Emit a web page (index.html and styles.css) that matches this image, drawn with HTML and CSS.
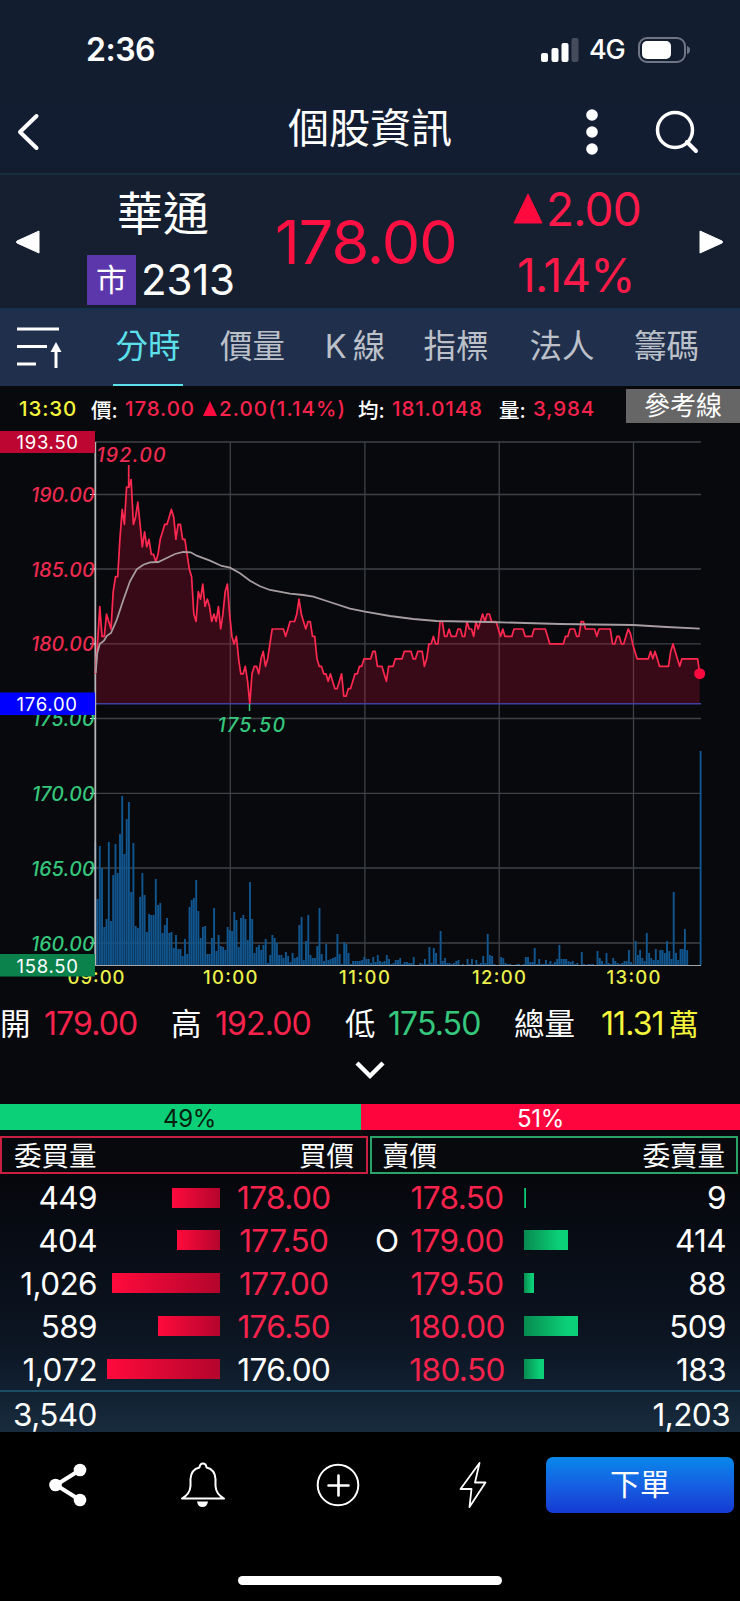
FILE: index.html
```
<!DOCTYPE html>
<html lang="zh-Hant">
  <head>
    <meta charset="UTF-8" />
    <meta name="viewport" content="width=device-width, initial-scale=1.0" />
    <title>個股資訊</title>
    <link rel="stylesheet" href="styles.css">
  </head>
  <body>
    <div class="statusBar">
      <span class="time">2:36</span>
      <svg class="signal" width="38" height="24" viewBox="0 0 38 24">
        <rect x="0" y="15" width="7" height="9" rx="2" fill="#fff" />
        <rect x="10.500" y="10" width="7" height="14" rx="2" fill="#fff" />
        <rect x="20.500" y="5" width="7" height="19" rx="2" fill="#fff" />
        <rect x="30.500" y="0" width="7" height="24" rx="2" fill="#454d5c" />
      </svg>
      <span class="network">4G</span>
      <svg class="battery" width="53" height="26" viewBox="0 0 53 26">
        <rect x="1" y="1" width="46" height="24" rx="8" fill="none" stroke="#6e7685" stroke-width="2" />
        <rect x="4" y="4" width="29" height="18" rx="5" fill="#fff" />
        <path d="M49 9q3 1 3 4t-3 4z" fill="#6e7685" />
      </svg>
    </div>

    <header class="titleBar">
      <svg class="back" width="24" height="38" viewBox="0 0 24 38">
        <path d="M20.500 3L4 19l16.500 16" fill="none" stroke="#fff" stroke-width="4" stroke-linecap="round" stroke-linejoin="round" />
      </svg>
      <h1>個股資訊</h1>
      <svg class="more" width="12" height="46" viewBox="0 0 12 46">
        <circle cx="6" cy="6" r="5.800" fill="#fff" />
        <circle cx="6" cy="23" r="5.800" fill="#fff" />
        <circle cx="6" cy="40" r="5.800" fill="#fff" />
      </svg>
      <svg class="search" width="44" height="44" viewBox="0 0 44 44">
        <circle cx="20" cy="20" r="17.500" fill="none" stroke="#fff" stroke-width="3.500" />
        <path d="M32 32l9 9" stroke="#fff" stroke-width="4" stroke-linecap="round" />
      </svg>
    </header>

    <section class="quote">
      <svg class="prev" width="24" height="24" viewBox="0 0 24 24"><path d="M23 1v22L1 13q-1-1 0-2z" fill="#fff" stroke="#fff" stroke-linejoin="round" /></svg>
      <div class="stock">
        <div class="stockName">華通</div>
        <div class="stockCode"><span class="market">市</span><span class="code">2313</span></div>
      </div>
      <div class="price">178.00</div>
      <div class="change">
        <div class="diff"><svg width="30" height="31" viewBox="0 0 30 31"><path d="M15 1L29 30H1z" fill="#ff0a3f" stroke="#ff0a3f" stroke-linejoin="round" /></svg><span>2.00</span></div>
        <div class="percent">1.14%</div>
      </div>
      <svg class="next" width="24" height="24" viewBox="0 0 24 24"><path d="M1 1v22l22-10q1-1 0-2z" fill="#fff" stroke="#fff" stroke-linejoin="round" /></svg>
    </section>

    <nav class="tabs">
      <svg class="sort" width="46" height="42" viewBox="0 0 46 42">
        <path d="M0 2h42M0 19.500h30M0 37h19" stroke="#fff" stroke-width="3" />
        <path d="M39 22v19" stroke="#fff" stroke-width="3" />
        <path d="M39 15l5.500 10h-11z" fill="#fff" />
      </svg>
      <a class="tab active">分時</a>
      <a class="tab">價量</a>
      <a class="tab kline">K 線</a>
      <a class="tab wide">指標</a>
      <a class="tab">法人</a>
      <a class="tab">籌碼</a>
    </nav>

    <div class="info">
      <span class="yellow infoTime">13:30</span>
      <span class="infoLabel">價:</span>
      <span class="red infoPrice">178.00</span>
      <span class="red infoDiff"><svg width="14" height="15" viewBox="0 0 14 15"><path d="M7 0l7 15H0z" fill="#ff0a3f" /></svg>2.00(1.14%)</span>
      <span class="infoLabel">均:</span>
      <span class="red infoAvg">181.0148</span>
      <span class="infoLabel">量:</span>
      <span class="red infoVol">3,984</span>
      <button class="refLine">參考線</button>
    </div>

    <svg class="chart" width="740" height="559" viewBox="0 431 740 559">
      <g class="grid">
        <path d="M95 442H701M95 494.500H701M95 569H701M95 643.900H701M95 718.500H701M95 793.300H701M95 868H701M95 943H701" />
        <path d="M230.300 442V965M364.900 442V965M499.200 442V965M633.500 442V965" />
      </g>
      <path id="area" class="area" />
      <path d="M95 703.700H701" class="refPrice" />
      <path id="volume" class="volume" />
      <path d="M95 965.500H701" class="baseline" />
      <path d="M95.300 442V965" class="axis" />
      <path d="M90 494.500h5M90 569h5M90 643.900h5M90 718.500h5M90 793.300h5M90 868h5M90 943h5" stroke="#fff" />
      <path id="line" class="line" />
      <path d="M128.700 465V488" class="line" />
      <path d="M249.500 704V711" stroke="#35c77c" stroke-width="1.500" />
      <path id="avg" class="avg" />
      <circle cx="699.700" cy="673.700" r="5.500" fill="#ff0a3f" />

      <g class="scale up">
        <text x="31" y="502" textLength="63.500">190.00</text>
        <text x="31" y="576.500" textLength="63.500">185.00</text>
        <text x="31" y="651.300" textLength="63.500">180.00</text>
        <text x="96.500" y="461.500" textLength="69">192.00</text>
      </g>
      <g class="scale down">
        <text x="32" y="726.300" textLength="62.500">175.00</text>
        <text x="32" y="801" textLength="62.500">170.00</text>
        <text x="31" y="875.500" textLength="63.500">165.00</text>
        <text x="31" y="950.500" textLength="63.500">160.00</text>
        <text x="217.500" y="731.500" textLength="67.500">175.50</text>
      </g>
      <g class="hours">
        <text x="67.500" y="984" textLength="57">09:00</text>
        <text x="203" y="984" textLength="54.500">10:00</text>
        <text x="339" y="984" textLength="51">11:00</text>
        <text x="472" y="984" textLength="54">12:00</text>
        <text x="606.500" y="984" textLength="54">13:00</text>
      </g>
      <g class="limits">
        <rect y="431" width="95" height="22" fill="#bd0632" />
        <rect y="692.500" width="95" height="22.500" fill="#0000ff" />
        <rect y="954" width="95" height="22.500" fill="#0b824c" />
        <text x="16.500" y="449.300" textLength="61.500">193.50</text>
        <text x="16.500" y="711" textLength="60.500">176.00</text>
        <text x="16.500" y="972.800" textLength="61.500">158.50</text>
      </g>
    </svg>

    <div class="summary">
      <span>開</span><b class="red">179.00</b>
      <span>高</span><b class="red">192.00</b>
      <span>低</span><b class="green">175.50</b>
      <span>總量</span><b class="yellow">11.31<i>萬</i></b>
    </div>

    <div class="expand">
      <svg width="30" height="19" viewBox="0 0 30 19"><path d="M2 2l13 13L28 2" fill="none" stroke="#fff" stroke-width="4.400" /></svg>
    </div>

    <div class="ratio">
      <div class="outer">49%</div>
      <div class="inner">51%</div>
    </div>

    <div class="bookHead">
      <div class="buyHead"><span>委買量</span><span>買價</span></div>
      <div class="sellHead"><span>賣價</span><span>委賣量</span></div>
    </div>

    <div class="book">
      <div id="rows"></div>
      <div class="totals"><span>3,540</span><span>1,203</span></div>
    </div>

    <footer class="actions">
      <svg class="share" width="40" height="46" viewBox="0 0 40 46">
        <path d="M31 8L7 23l24 15" fill="none" stroke="#fff" stroke-width="4" />
        <circle cx="31" cy="8" r="6.300" fill="#fff" /><circle cx="6.500" cy="23" r="6.300" fill="#fff" /><circle cx="31" cy="38" r="6.300" fill="#fff" />
      </svg>
      <svg class="bell" width="46" height="46" viewBox="0 0 46 46">
        <path d="M2 36.500Q10 32 10.500 24V17Q11 7.500 19.500 5.500Q20 1.500 23 1.500T26.500 5.500Q35 7.500 35.500 17V24Q36 32 44 36.500z" fill="none" stroke="#fff" stroke-width="2" stroke-linejoin="round" />
        <path d="M17 39.500h11q-1 5.500-5.500 5.500t-5.500-5.500z" fill="#fff" />
      </svg>
      <svg class="plus" width="44" height="44" viewBox="0 0 44 44">
        <circle cx="22" cy="22" r="20.300" fill="none" stroke="#fff" stroke-width="2" />
        <path d="M12.500 22.500h20M22.500 12.500v20" stroke="#fff" stroke-width="2.600" stroke-linecap="round" />
      </svg>
      <svg class="bolt" width="28" height="48" viewBox="0 0 28 48">
        <path d="M20.500 2L1.500 28H12.500L10.500 46L26.500 21.500H16z" fill="none" stroke="#fff" stroke-width="1.800" stroke-linejoin="round" />
      </svg>
      <button class="order">下單</button>
    </footer>
    <div class="homeBar"></div>

    <script>
      // one value per minute, 09:00 - 13:30
      const prices = [
        178, 180, 182.5, 180.5, 180.5, 182, 181.5, 181, 183.5, 184.5,
        184.5, 187, 189, 188, 190.5, 190.5, 191, 188, 188.5, 189.5,
        188, 186.5, 187.5, 186.5, 187, 186, 186, 185.5, 186, 187,
        187.5, 188, 188, 188.5, 189, 188.5, 187, 188, 188, 187,
        187, 186, 185, 184.5, 182, 181.5, 183.5, 183, 184, 182.5,
        183, 182.5, 181.5, 182, 181.5, 182.5, 181, 182, 183.5, 184,
        182, 180.5, 180, 180.5, 179, 178, 178, 178.5, 177.5, 176,
        178, 178.5, 178.5, 178, 179, 179.5, 178.5, 179, 180, 181,
        181, 181, 181, 181, 181, 180.5, 181, 181.5, 181.5, 181.5,
        182, 183, 182, 181.5, 181, 181.5, 181.5, 180.5, 180.5, 179,
        178.5, 178.5, 178, 178, 177.5, 178, 177.5, 177, 177, 177.5,
        178, 176.5, 176.5, 177, 177, 177.5, 178, 178, 178.5, 178.5,
        179, 179, 179, 179, 179.5, 179.5, 178.5, 178.5, 178.5, 178,
        177.5, 178.5, 178.5, 178.5, 179, 179, 179, 179, 179.5, 179.5,
        179.5, 179.5, 179, 179, 179.5, 179.5, 179.5, 178.5, 179, 180,
        180, 180.5, 180, 180, 181.5, 181.5, 180.5, 180.5, 181, 180.5,
        180.5, 180.5, 181, 181, 180.5, 180.5, 181.5, 181, 181, 180.5,
        181.5, 181, 181.5, 182, 181.5, 182, 182, 181.5, 181.5, 181.5,
        181, 180.5, 181, 180.5, 180.5, 180.5, 180.5, 181, 181, 181,
        181, 181, 180.5, 180.5, 180.5, 180.5, 181, 181, 181, 181,
        181, 181, 180.5, 180, 180, 180, 180, 180, 180, 180,
        180.5, 180.5, 181, 181, 181, 180.5, 180.5, 181.5, 181.5, 181,
        181, 181, 181, 181, 180.5, 181, 181, 181, 181, 181,
        181, 180, 180, 180.5, 180.5, 180, 180, 180.5, 181, 180.7,
        180, 179.5, 179, 179, 179, 179, 179, 179, 179.5, 179,
        179.5, 179, 178.5, 178.5, 178.5, 178.5, 178.5, 179.5, 180, 179.5,
        179, 178.5, 179, 179, 179, 179, 179, 179, 179, 179,
        178,
      ];
      const volumes = [
        123, 66, 119, 97, 38, 46, 123, 44, 90, 121, 92, 131, 169, 111, 146, 163, 73, 122, 39, 37,
        68, 92, 70, 33, 51, 50, 50, 86, 60, 62, 32, 40, 47, 32, 33, 17, 30, 16, 16, 9,
        26, 11, 58, 65, 67, 85, 54, 27, 38, 39, 11, 11, 27, 57, 14, 30, 19, 18, 15, 38,
        35, 34, 53, 45, 18, 47, 50, 46, 25, 83, 46, 12, 18, 20, 15, 20, 26, 2, 10, 30,
        27, 22, 10, 10, 7, 13, 9, 3, 12, 7, 8, 40, 48, 5, 24, 50, 10, 7, 7, 19,
        57, 11, 4, 21, 5, 6, 7, 8, 31, 11, 1, 23, 21, 12, 1, 4, 4, 4, 4, 5,
        8, 6, 6, 2, 8, 3, 10, 4, 3, 4, 10, 6, 1, 2, 5, 5, 7, 1, 3, 3,
        2, 2, 8, 0, 0, 2, 1, 6, 1, 18, 2, 17, 12, 1, 34, 4, 7, 2, 2, 1,
        2, 4, 5, 0, 1, 0, 6, 1, 6, 0, 5, 1, 2, 9, 2, 31, 10, 9, 1, 0,
        0, 8, 7, 2, 1, 1, 0, 0, 1, 1, 0, 1, 8, 8, 3, 3, 17, 1, 6, 1,
        1, 5, 1, 4, 1, 3, 6, 20, 6, 6, 6, 4, 3, 4, 1, 2, 0, 13, 1, 0,
        1, 1, 1, 0, 14, 7, 4, 1, 12, 2, 1, 7, 4, 2, 1, 2, 4, 4, 15, 3,
        1, 24, 10, 15, 7, 4, 32, 12, 7, 5, 16, 5, 15, 15, 12, 24, 14, 6, 73, 12,
        5, 16, 16, 36, 15, 0, 0, 0, 0, 0, 214,
      ];
      const average = [
        [95.7, 673], [97.3, 653], [99.7, 644], [104, 640.7], [106.7, 636], [111, 633], [116.7, 620],
        [123.3, 600], [130, 581.3], [136.7, 569.3], [143.3, 564.7], [150, 562.3], [158.3, 562],
        [166.7, 558], [175, 554], [183.3, 552], [190.7, 552.3], [196.7, 555.7], [210, 560.7],
        [221.7, 566], [230, 567.7], [240, 573.3], [250, 580.7], [260, 586.3], [270, 590],
        [290, 593.7], [303.3, 595], [313.3, 596.7], [326.7, 601], [350, 608.7], [365, 611.7],
        [390, 616], [413.3, 619], [436.7, 621], [490, 622], [560, 624], [633.3, 625],
        [666.7, 627], [699.7, 628.7],
      ];

      const xAt = (i, step) => (95.3 + i * step).toFixed(1);
      const yAt = (price) => (494.5 + (190 - price) * 14.94).toFixed(1);

      const points = prices.map((p, i) => `${xAt(i, 2.239)} ${yAt(p)}`).join("L");
      document.getElementById("line").setAttribute("d", `M${points}`);
      document.getElementById("area").setAttribute("d", `M95.3 703.7L${points}V703.7z`);
      document.getElementById("avg").setAttribute("d", "M" + average.map((p) => p.join(" ")).join("L"));
      document
        .getElementById("volume")
        .setAttribute("d", volumes.map((v, i) => `M${xAt(i, 2.242)} 965v-${v}`).join(""));

      const book = [
        ["449", 48, "178.00", "", "178.50", 2, "9"],
        ["404", 43, "177.50", "O", "179.00", 44, "414"],
        ["1,026", 108, "177.00", "", "179.50", 10, "88"],
        ["589", 62, "176.50", "", "180.00", 54, "509"],
        ["1,072", 113, "176.00", "", "180.50", 20, "183"],
      ];
      document.getElementById("rows").innerHTML = book
        .map(
          (r) => `
          <div class="row">
            <span class="qty">${r[0]}</span>
            <span class="barBuy"><i style="width: ${r[1]}px"></i></span>
            <span class="buyPrice ${r[2] === "176.00" ? "" : "red"}">${r[2]}</span>
            <span class="mark">${r[3]}</span>
            <span class="sellPrice red">${r[4]}</span>
            <span class="barSell"><i style="width: ${r[5]}px"></i></span>
            <span class="qty">${r[6]}</span>
          </div>`
        )
        .join("");
    </script>
  </body>
</html>
```
FILE: styles.css
```
* {
  box-sizing: border-box;
}

body {
  margin: 0;
  width: 740px;
  height: 1601px;
  overflow: hidden;
  background-color: #07090d;
  color: #fff;
  font-family: Inter, "Noto Sans CJK TC", sans-serif;
}

svg {
  display: block;
  flex: none;
}

button {
  border: none;
  padding: 0;
  color: #fff;
  font-family: inherit;
}

.red {
  color: #f8234c;
}

.green {
  color: #35c77c;
}

.yellow {
  color: #f5f53c;
}

/* top */
.statusBar {
  display: flex;
  align-items: center;
  height: 98px;
  padding: 1px 0 0 86px;
  background-color: #131d30;
  line-height: 40px;
}

.time {
  width: 455px;
  padding-top: 1px;
  font-size: 32px;
  font-weight: 600;
  letter-spacing: -0.5px;
}

.network {
  width: 49px;
  margin-left: 10px;
  padding-top: 1px;
  font-size: 27px;
  font-weight: 500;
  letter-spacing: -1.2px;
}

.titleBar {
  display: flex;
  align-items: center;
  height: 75px;
  padding-left: 16px;
  padding-bottom: 8px;
  background-color: #131d31;
}

.titleBar h1 {
  width: 166px;
  margin: -7px 0 0 248px;
  font-size: 41px;
  line-height: 50px;
  font-weight: 400;
  white-space: nowrap;
}

.more {
  margin-left: 132px;
}

.search {
  margin-left: 57px;
}

.quote {
  display: flex;
  align-items: center;
  height: 135px;
  padding-left: 16px;
  border-top: 2px solid #14303f;
  background-color: #151f30;
}

.stock {
  width: 190px;
  margin-left: 47px;
}

.stockName {
  padding-left: 30px;
  height: 76px;
  font-size: 46px;
  line-height: 70px;
}

.stockCode {
  display: flex;
  align-items: center;
  height: 51px;
}

.market {
  width: 49px;
  height: 50px;
  background-color: #5c37ab;
  font-size: 31px;
  line-height: 50px;
  text-align: center;
}

.code {
  margin-left: 5px;
  font-size: 42px;
  letter-spacing: -0.2px;
}

.price {
  width: 237px;
  margin-left: -2px;
  color: #ff1043;
  font-size: 61px;
  letter-spacing: -1px;
}

.change {
  width: 156px;
  margin-left: 1px;
  color: #ff1a4a;
  font-size: 46px;
  line-height: 66px;
  letter-spacing: -0.8px;
  white-space: nowrap;
}

.diff {
  display: flex;
  align-items: center;
  gap: 3px;
}

.percent {
  padding-left: 4px;
}

.next {
  margin-left: 30px;
}

/* tabs */
.tabs {
  display: flex;
  height: 78px;
  border-top: 2px solid #15324d;
  background-color: #202f4c;
}

.sort {
  margin: 17px 50px 0 17px;
}

.tab {
  flex: none;
  width: 70px;
  height: 76px;
  margin-right: 34.5px;
  color: #bcc0c9;
  font-size: 32.5px;
  line-height: 74px;
  text-align: center;
  white-space: nowrap;
}

.tab.active {
  color: #5ce1ec;
  border-bottom: 2px solid #5ce1ec;
}

.tab.kline {
  width: 66px;
  margin-right: 33px;
  word-spacing: -3px;
}

.tab.wide {
  margin-right: 36px;
}

.info {
  display: flex;
  align-items: center;
  height: 45px;
  padding-left: 19px;
  font-size: 20.5px;
  font-weight: 500;
  letter-spacing: 0.9px;
  white-space: nowrap;
}

.infoTime {
  width: 72px;
}

.infoLabel {
  width: 34px;
  letter-spacing: 0;
}

.infoPrice {
  width: 78px;
}

.infoDiff {
  display: flex;
  align-items: center;
  gap: 2px;
  width: 155px;
  letter-spacing: 1.1px;
}

.infoAvg {
  width: 107px;
}

.infoVol {
  width: 93px;
}

.refLine {
  width: 114px;
  height: 34px;
  margin-bottom: 5px;
  background-color: #666;
  font-size: 26px;
  line-height: 34px;
}

/* chart */
.grid {
  stroke: #3f4146;
  stroke-width: 1.3;
}

.area {
  fill: rgba(255, 12, 62, 0.2);
}

.refPrice {
  stroke: #4040a0;
  stroke-width: 1.4;
}

.volume {
  stroke: #11568f;
  stroke-width: 1.9;
}

.baseline {
  stroke: #a5a7aa;
  stroke-width: 1.2;
}

.axis {
  stroke: #b5b5b8;
  stroke-width: 1.8;
}

.line {
  fill: none;
  stroke: #ff2850;
  stroke-width: 1.7;
  stroke-linejoin: round;
}

.avg {
  fill: none;
  stroke: #a79da0;
  stroke-width: 1.8;
}

.scale {
  font-size: 19.5px;
  font-style: italic;
  font-weight: 500;
}

.up {
  fill: #ee2a50;
}

.down {
  fill: #35c77c;
}

.hours {
  fill: #ebf04a;
  font-size: 18.5px;
  font-weight: 500;
}

.limits {
  fill: #fff;
  font-size: 18.5px;
}

/* day summary */
.summary {
  display: grid;
  grid-template-columns: 44px 127px 44px 130px 43px 126px 86px 139px;
  height: 68px;
  line-height: 67px;
  font-size: 30.5px;
  white-space: nowrap;
}

.summary b {
  font-size: 32px;
  font-weight: 400;
  letter-spacing: -0.9px;
}

.summary .yellow {
  padding-left: 1px;
}

.summary i {
  margin-left: 5px;
  font-size: 30px;
  font-style: normal;
}

.expand {
  display: flex;
  justify-content: center;
  height: 46px;
  padding-top: 3px;
}

.ratio {
  display: flex;
  height: 26px;
  font-size: 24px;
  line-height: 30px;
  letter-spacing: -0.3px;
  text-align: center;
}

.outer {
  width: 361px;
  padding-left: 18px;
  background-color: #0bd077;
  color: #05210f;
}

.inner {
  width: 379px;
  padding-right: 20px;
  background-color: #ff053d;
}

.bookHead {
  display: flex;
  gap: 2px;
  margin-top: 6px;
  font-size: 27.5px;
  line-height: 36px;
}

.bookHead div {
  display: flex;
  justify-content: space-between;
  width: 368px;
  height: 38px;
  padding: 0 12px;
  border: 2px solid #c91f43;
}

.bookHead .sellHead {
  padding: 0 11px 0 10px;
  border-color: #2aa268;
}

/* order book */
.book {
  height: 258px;
  padding-top: 2px;
  background: linear-gradient(#06070c, #080d16 30%, #0c1522 65%, #112031 84%, #182c3e);
  font-size: 31.5px;
  letter-spacing: -0.6px;
}

.row {
  display: grid;
  grid-template-columns: 97px 122.5px 155.5px 26px 123px 131px 71px;
  align-items: center;
  height: 42.9px;
  line-height: 43px;
}

.qty {
  text-align: right;
}

.barBuy,
.barSell {
  display: flex;
}

.barBuy {
  justify-content: flex-end;
}

.row i {
  height: 20px;
  background: linear-gradient(90deg, #ff0a3c, #b4052c);
}

.barSell i {
  background: linear-gradient(90deg, #078a50, #0bd077 80%);
}

.buyPrice {
  padding-right: 27px;
  text-align: center;
}

.sellPrice {
  padding-right: 11px;
  text-align: center;
}

.totals {
  display: flex;
  justify-content: space-between;
  height: 41.5px;
  padding: 0 10px 0 13px;
  border-top: 2px solid #1c4e66;
  line-height: 45px;
}

/* bottom */
.actions {
  display: flex;
  align-items: center;
  height: 144px;
  padding-bottom: 39px;
  background-color: #000;
}

.share {
  margin-left: 49px;
}

.bell {
  margin-left: 91px;
}

.plus {
  margin-left: 90px;
}

.bolt {
  margin-left: 99px;
}

.order {
  width: 188px;
  height: 56px;
  margin-left: 59px;
  border-radius: 7px;
  background: linear-gradient(#0888ea, #1660e2 50%, #153ad3);
  font-size: 30px;
  line-height: 55px;
}

.homeBar {
  height: 25px;
  background: #000;
}

.homeBar::before {
  content: "";
  display: block;
  width: 264px;
  height: 9px;
  margin-left: 238px;
  border-radius: 5px;
  background-color: #fff;
}
```
